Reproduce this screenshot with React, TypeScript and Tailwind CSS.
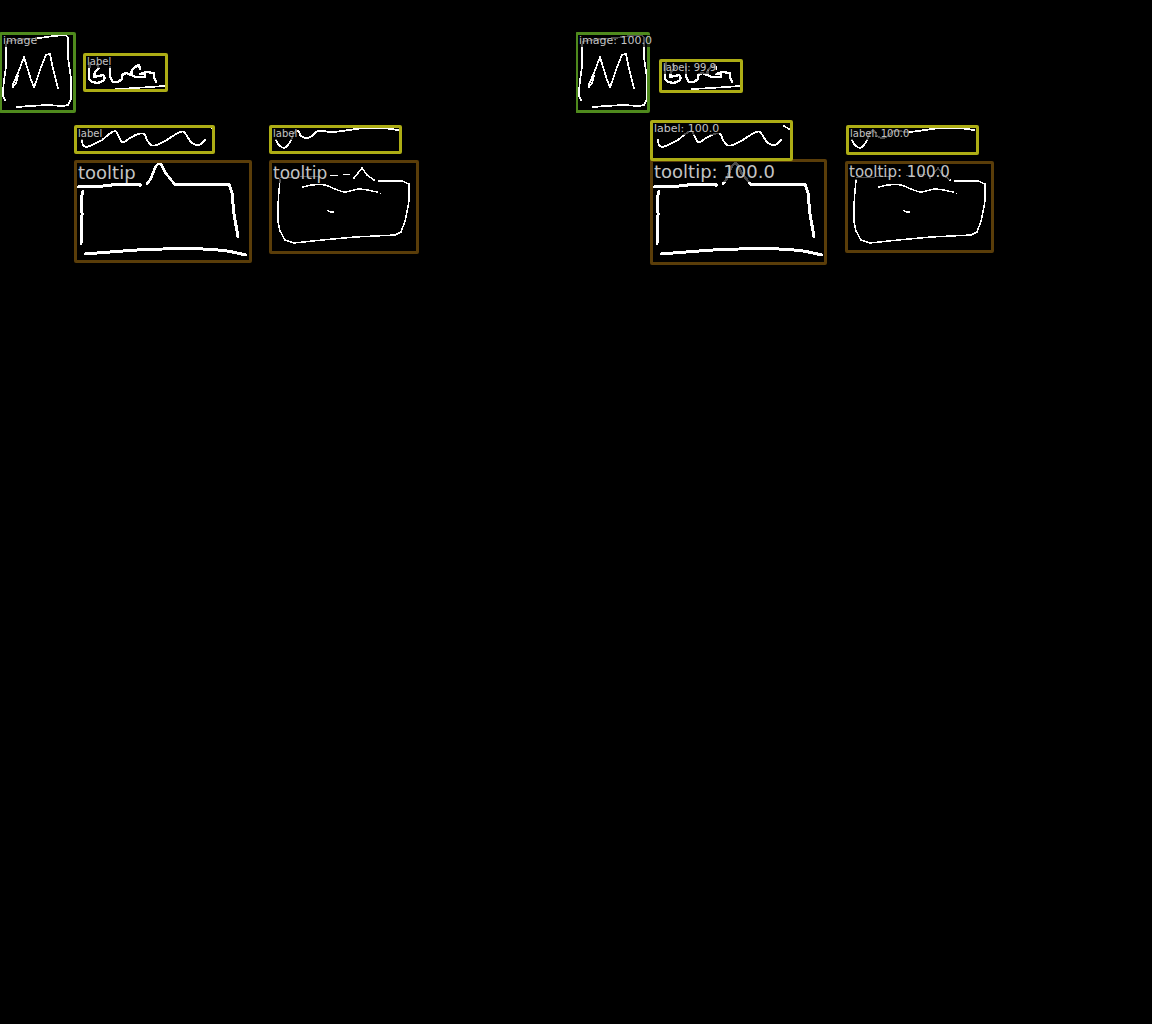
type Tone = "image" | "label" | "tooltip";

type Detection = {
  text: string;
  tone: Tone;
  x: number;
  y: number;
  w: number;
  h: number;
  size: string;
};

type Point = [number, number];

const borderTone: Record<Tone, string> = {
  image: "border-[#4f8a1d]",
  label: "border-[#adad15]",
  tooltip: "border-[#5a3d09]",
};

const truth: Detection[] = [
  { text: "tooltip", tone: "tooltip", x: 74, y: 160, w: 178, h: 103, size: "text-[18px] leading-5" },
  { text: "tooltip", tone: "tooltip", x: 269, y: 160, w: 150, h: 94, size: "text-[17px] leading-5" },
  { text: "image", tone: "image", x: -1, y: 32, w: 77, h: 81, size: "text-[11px] leading-3" },
  { text: "label", tone: "label", x: 83, y: 53, w: 85, h: 39, size: "text-[10px] leading-3" },
  { text: "label", tone: "label", x: 74, y: 125, w: 141, h: 29, size: "text-[10px] leading-3" },
  { text: "label", tone: "label", x: 269, y: 125, w: 133, h: 29, size: "text-[10px] leading-3" },
];

const predicted: Detection[] = [
  { text: "tooltip: 100.0", tone: "tooltip", x: 74, y: 159, w: 177, h: 106, size: "text-[18px] leading-5" },
  { text: "tooltip: 100.0", tone: "tooltip", x: 269, y: 161, w: 149, h: 92, size: "text-[15px] leading-4" },
  { text: "image: 100.0", tone: "image", x: -1, y: 32, w: 75, h: 81, size: "text-[11px] leading-3" },
  { text: "label: 99.9", tone: "label", x: 83, y: 59, w: 84, h: 34, size: "text-[10px] leading-3" },
  { text: "label: 100.0", tone: "label", x: 74, y: 120, w: 143, h: 41, size: "text-[11px] leading-3" },
  { text: "label: 100.0", tone: "label", x: 270, y: 125, w: 133, h: 30, size: "text-[10px] leading-3" },
];

const strokes: { width: number; sharp?: boolean; points: Point[] }[] = [
  // picture frame with an M
  { width: 1.7, points: [[7, 42], [6, 46], [6, 65], [4, 81], [3, 95], [5, 100]] },
  { width: 1.7, sharp: true, points: [[9, 41], [25, 39], [40, 38], [53, 36], [66, 35], [68, 38], [68, 58], [71, 78], [71, 99], [68, 105], [63, 106], [47, 105], [30, 106], [17, 107]] },
  { width: 1.7, sharp: true, points: [[18, 76], [16, 83], [13, 87], [13, 84], [18, 73], [24, 57], [28, 70], [31, 80], [34, 87], [36, 82], [41, 67], [46, 55], [50, 54], [52, 64], [55, 77], [58, 88]] },
  // BUG
  { width: 2.4, sharp: true, points: [[90, 63], [89, 70], [89, 79], [92, 82], [98, 83], [103, 81], [105, 78], [103, 75], [94, 77], [95, 72], [99, 68], [97, 65]] },
  { width: 2.4, sharp: true, points: [[110, 67], [110, 77], [113, 82], [118, 82], [122, 79], [122, 75], [126, 73], [131, 75], [132, 70], [135, 67], [139, 65], [140, 69]] },
  { width: 2.2, sharp: true, points: [[131, 75], [136, 77], [145, 77], [145, 74], [140, 74], [146, 72], [154, 73], [154, 77], [156, 82]] },
  { width: 1.7, points: [[116, 89], [135, 88], [150, 87], [164, 86]] },
  // text squiggles
  { width: 1.8, points: [[82, 140], [83, 145], [86, 147], [92, 145], [102, 140], [108, 135], [115, 131], [118, 135], [121, 141], [124, 142], [130, 138], [138, 134], [144, 134], [147, 140], [151, 145], [157, 145], [165, 141], [173, 136], [180, 132], [184, 132], [187, 136], [191, 142], [196, 145], [201, 144], [205, 140]] },
  { width: 1.7, points: [[208, 126], [213, 129]] },
  { width: 1.8, points: [[276, 140], [279, 145], [284, 148], [288, 145], [291, 140], [294, 133], [298, 131], [301, 136], [307, 138], [312, 136], [318, 131], [332, 132], [349, 130], [365, 128], [382, 128], [398, 130]] },
  // large tooltip
  { width: 3, sharp: true, points: [[78, 187], [103, 186], [120, 184], [140, 184], [140, 186]] },
  { width: 2.6, points: [[147, 184], [151, 178], [155, 168], [158, 164], [161, 164], [165, 172], [172, 181], [175, 185]] },
  { width: 3, sharp: true, points: [[175, 184], [197, 184], [220, 185], [229, 184], [232, 193], [234, 214], [238, 237]] },
  { width: 3, points: [[83, 191], [82, 195], [82, 218], [81, 244]] },
  { width: 3, points: [[85, 254], [110, 252], [137, 250], [163, 249], [203, 249], [227, 251], [246, 255]] },
  // small tooltip
  { width: 1, points: [[280, 177], [300, 177], [318, 176]] },
  { width: 1, points: [[330, 175], [338, 175]] },
  { width: 1, points: [[343, 174], [350, 174]] },
  { width: 1.5, sharp: true, points: [[354, 178], [362, 168], [367, 175], [374, 180]] },
  { width: 1.5, sharp: true, points: [[379, 181], [402, 181], [409, 184], [409, 201], [407, 212], [405, 221], [401, 232], [395, 235], [355, 237], [322, 240], [294, 243], [285, 240], [280, 231], [278, 222], [278, 205], [279, 191], [280, 180]] },
  { width: 1.5, points: [[303, 187], [312, 185], [325, 185], [335, 189], [345, 192], [359, 189], [377, 192]] },
  { width: 1, points: [[380, 193], [381, 193]] },
  { width: 1.3, points: [[327, 210], [330, 212], [334, 212]] },
];

// Catmull-Rom spline through the points, written as cubic Béziers.
function curve(p: Point[]): string {
  let d = `M${p[0][0]} ${p[0][1]}`;
  for (let i = 0; i < p.length - 1; i++) {
    const a = p[Math.max(i - 1, 0)];
    const b = p[i];
    const c = p[i + 1];
    const e = p[Math.min(i + 2, p.length - 1)];
    const len = Math.hypot(c[0] - b[0], c[1] - b[1]);
    const before = Math.hypot(c[0] - a[0], c[1] - a[1]) || 1;
    const after = Math.hypot(e[0] - b[0], e[1] - b[1]) || 1;
    const s = len / 3 / before;
    const t = len / 3 / after;
    d += `C${b[0] + (c[0] - a[0]) * s} ${b[1] + (c[1] - a[1]) * s} ${c[0] - (e[0] - b[0]) * t} ${c[1] - (e[1] - b[1]) * t} ${c[0]} ${c[1]}`;
  }
  return d;
}

function polyline(p: Point[]): string {
  return "M" + p.map((q) => q.join(" ")).join("L");
}

function Sketch() {
  return (
    <svg
      className="absolute left-0 top-0"
      width="430"
      height="270"
      viewBox="0 0 430 270"
      fill="none"
      stroke="#fff"
      strokeLinecap="round"
      strokeLinejoin="round"
      shapeRendering="crispEdges"
      aria-hidden="true"
    >
      {strokes.map((s, i) => (
        <path key={i} d={s.sharp ? polyline(s.points) : curve(s.points)} strokeWidth={s.width} />
      ))}
    </svg>
  );
}

function Box({ d }: { d: Detection }) {
  return (
    <div
      className={`absolute rounded-[2px] border-3 ${borderTone[d.tone]}`}
      style={{ left: d.x, top: d.y, width: d.w, height: d.h }}
    >
      <span className={`absolute left-px top-0 whitespace-nowrap bg-black/70 text-[#c4c4c4] ${d.size}`}>
        {d.text}
      </span>
    </div>
  );
}

function Panel({ name, items }: { name: string; items: Detection[] }) {
  return (
    <section aria-label={name} className="relative min-h-screen overflow-hidden">
      <Sketch />
      {items.map((d, i) => (
        <Box key={i} d={d} />
      ))}
    </section>
  );
}

export default function App() {
  return (
    <main className="grid min-h-screen grid-cols-2 bg-black font-['DejaVu_Sans',sans-serif]">
      <Panel name="Annotations" items={truth} />
      <Panel name="Detections" items={predicted} />
    </main>
  );
}
